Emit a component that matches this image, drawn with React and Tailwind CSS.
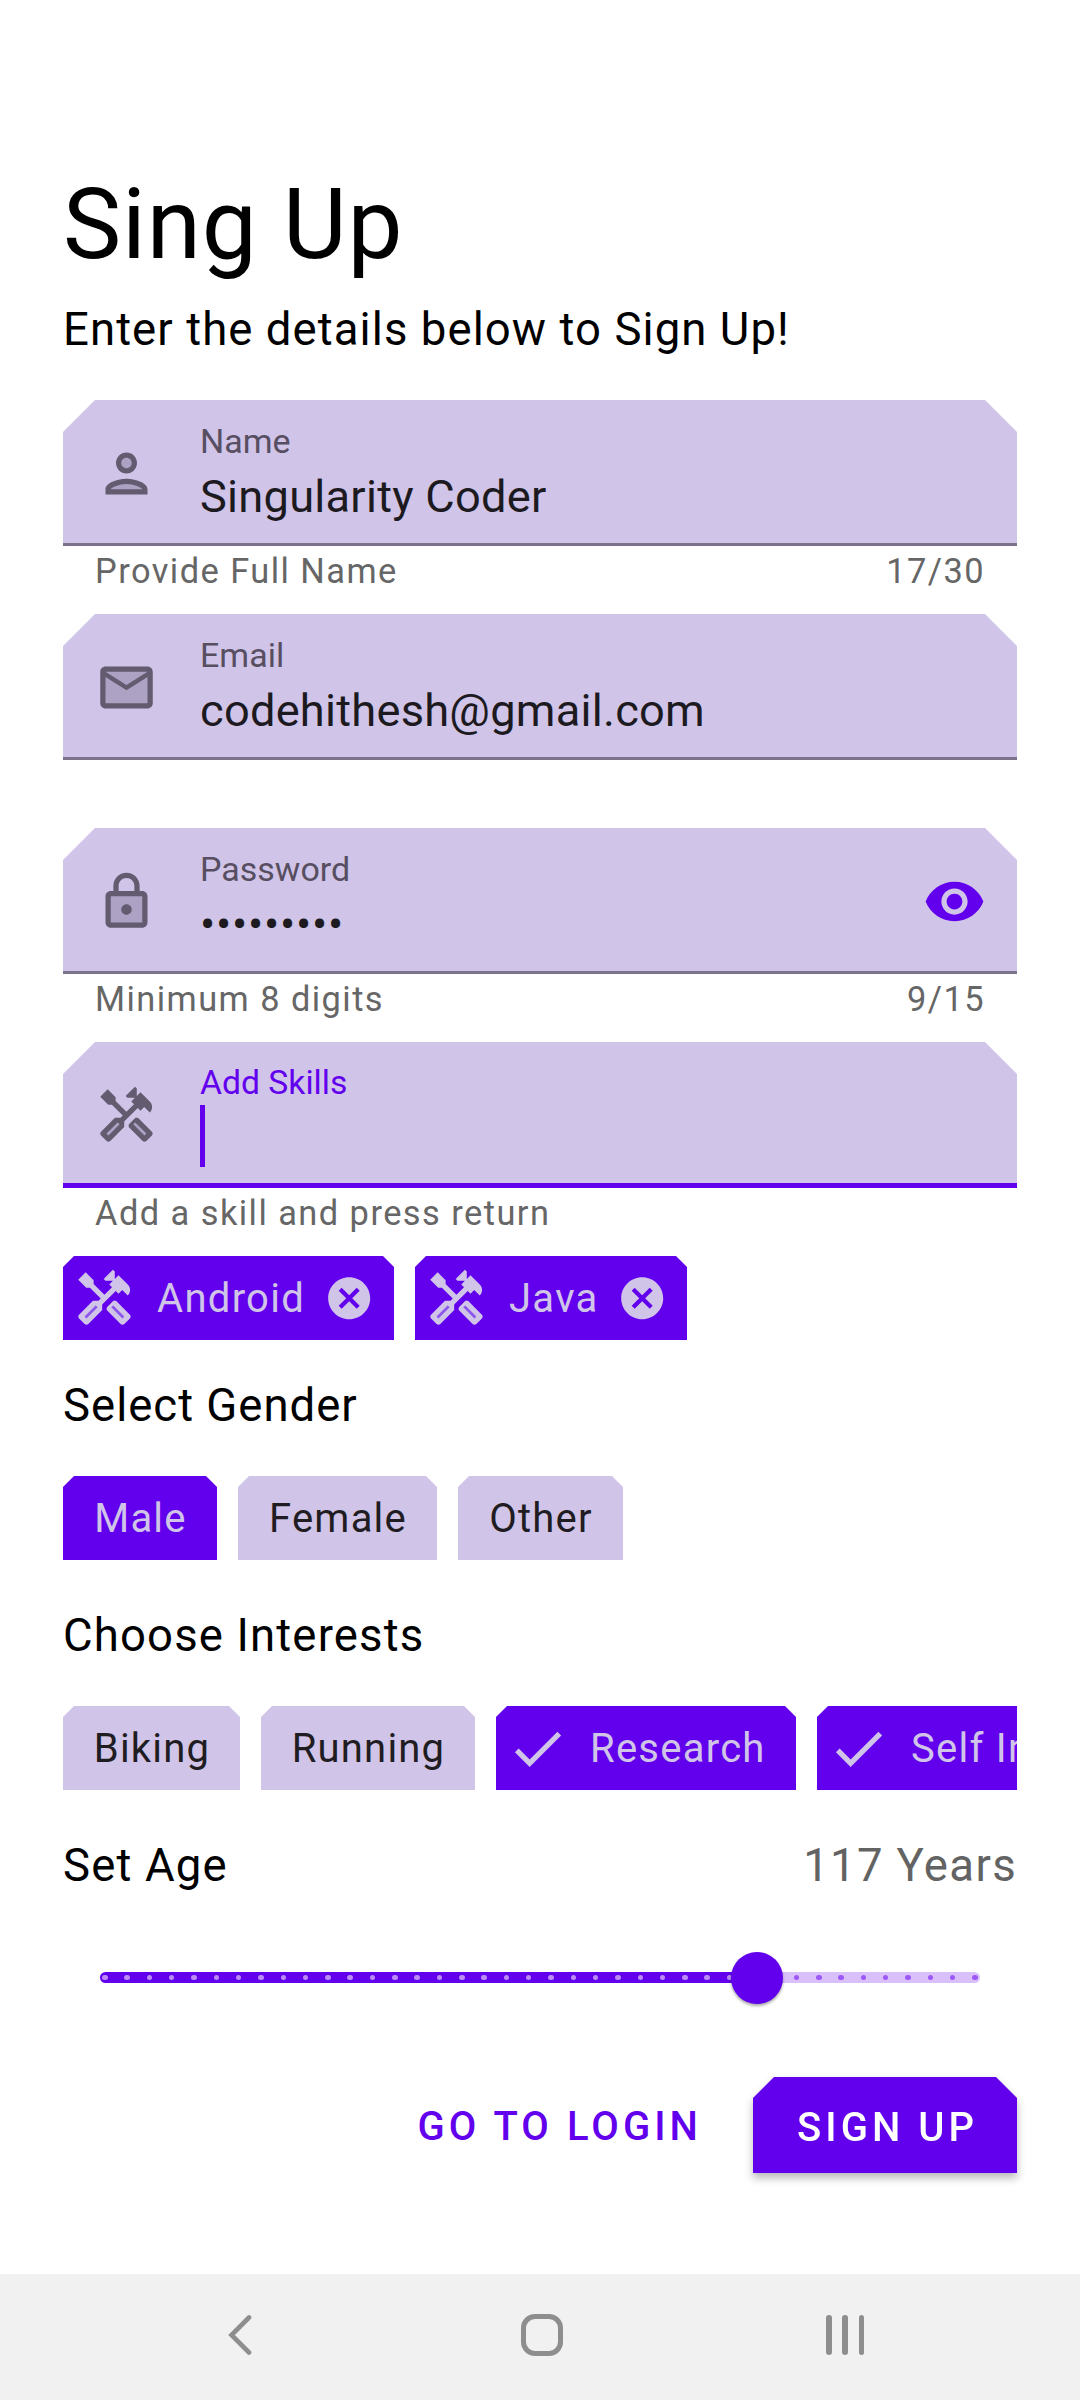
const CUT_LG = "[clip-path:polygon(32px_0,calc(100%-32px)_0,100%_32px,100%_100%,0_100%,0_32px)]";
const CUT_MD = "[clip-path:polygon(21px_0,calc(100%-21px)_0,100%_21px,100%_100%,0_100%,0_21px)]";
const CUT_SM = "[clip-path:polygon(11px_0,calc(100%-11px)_0,100%_11px,100%_100%,0_100%,0_11px)]";

function Icon({ children, className = "size-[63px]" }) {
  return (
    <svg viewBox="0 0 24 24" fill="currentColor" className={`${className} shrink-0`}>
      {children}
    </svg>
  );
}

function PersonIcon() {
  return (
    <Icon>
      <g className="text-[#ada2c3]">
        <circle cx="12" cy="8" r="2.5" fill="currentColor" />
        <path d="M12 15.5c-2.9 0-6.4 1.4-6.5 2.5v.5h13V18c-.1-1.1-3.6-2.5-6.5-2.5z" fill="currentColor" />
      </g>
      <path d="M12 12c2.21 0 4-1.79 4-4s-1.79-4-4-4-4 1.79-4 4 1.79 4 4 4zm0-6c1.1 0 2 .9 2 2s-.9 2-2 2-2-.9-2-2 .9-2 2-2zm0 8c-2.67 0-8 1.34-8 4v2h16v-2c0-2.66-5.33-4-8-4zm6 4H6v-.01C6.2 17.29 9.3 16 12 16s5.8 1.29 6 2z" />
    </Icon>
  );
}

function MailIcon() {
  return (
    <Icon>
      <path d="M3 5h18v14H3z" className="text-[#ada2c3]" fill="currentColor" />
      <path d="M22 6c0-1.1-.9-2-2-2H4c-1.1 0-2 .9-2 2v12c0 1.1.9 2 2 2h16c1.1 0 2-.9 2-2V6zm-2 0-8 5-8-5h16zm0 12H4V8l8 5 8-5v10z" />
    </Icon>
  );
}

function LockIcon() {
  return (
    <Icon>
      <path d="M5 9h14v12H5z" className="text-[#ada2c3]" fill="currentColor" />
      <path d="M18 8h-1V6c0-2.76-2.24-5-5-5S7 3.24 7 6v2H6c-1.1 0-2 .9-2 2v10c0 1.1.9 2 2 2h12c1.1 0 2-.9 2-2V10c0-1.1-.9-2-2-2zM9 6c0-1.66 1.34-3 3-3s3 1.34 3 3v2H9V6zm9 14H6V10h12v10zm-6-3c1.1 0 2-.9 2-2s-.9-2-2-2-2 .9-2 2 .9 2 2 2z" />
    </Icon>
  );
}

function ToolsIcon({ inner }) {
  return (
    <Icon>
      <g className={inner}>
        <path d="M14.6 15.35l.71-.71 4.24 4.24-.71.71z" fill="currentColor" stroke="currentColor" strokeWidth=".3" />
        <path d="M9.36 15.34l-.71-.71-4.24 4.24.71.71z" fill="currentColor" stroke="currentColor" strokeWidth=".3" />
      </g>
      <path d="M21.67 18.17l-5.3-5.3h-.99l-2.54 2.54v.99l5.3 5.3c.39.39 1.02.39 1.41 0l2.12-2.12c.39-.38.39-1.02 0-1.41zm-2.83 1.42l-4.24-4.24.71-.71 4.24 4.24-.71.71z" />
      <path d="M17.34 10.19l1.41-1.41 2.12 2.12c1.17-1.17 1.17-3.07 0-4.24l-3.54-3.54-1.41 1.41V1.71L15.22 1l-3.54 3.54.71.71h2.83l-1.41 1.41 1.06 1.06-2.89 2.89-4.13-4.13V5.06L4.83 2.04 2 4.87 5.03 7.9h1.41l4.13 4.13-.85.85H7.6l-5.3 5.3c-.39.39-.39 1.02 0 1.41l2.12 2.12c.39.39 1.02.39 1.41 0l5.3-5.3v-2.12l5.15-5.15 1.06 1.05zm-7.98 5.15l-4.24 4.24-.71-.71 4.24-4.24.71.71z" />
    </Icon>
  );
}

function EyeIcon() {
  return (
    <Icon className="size-[63px] text-[#6200ee]">
      <path d="M12 4.5C7 4.5 2.73 7.61 1 12c1.73 4.39 6 7.5 11 7.5s9.27-3.11 11-7.5c-1.73-4.39-6-7.5-11-7.5zM12 17c-2.76 0-5-2.24-5-5s2.24-5 5-5 5 2.24 5 5-2.24 5-5 5zm0-8c-1.66 0-3 1.34-3 3s1.34 3 3 3 3-1.34 3-3-1.34-3-3-3z" />
    </Icon>
  );
}

function Field({ icon, label, value, password, focused, trailing, helper, counter }) {
  return (
    <div className="flex h-[214px] flex-col">
      <div
        className={`${CUT_LG} flex h-[146px] items-center bg-[#d0c4e8] pr-[31px] pl-[32px] ${
          focused ? "shadow-[inset_0_-5px_0_#6200ee]" : "shadow-[inset_0_-3px_0_#7d728b]"
        }`}
      >
        <span className="text-[#635b6f]">{icon}</span>
        <div className="ml-[42px] flex h-full flex-1 flex-col pt-[21px]">
          <span
            className={`leading-[40px] ${
              focused ? "text-[33.7px] text-[#6200ee]" : "text-[34px] text-[#574f61]"
            }`}
          >
            {label}
          </span>
          {focused ? (
            <span className="mt-[2px] h-[62px] w-[5px] bg-[#6200ee]" />
          ) : (
            <span
              className={`mt-[6px] text-[45.2px] leading-[60px] text-[#1c1a1f] ${
                password ? "tracking-[0.75px]" : "tracking-[0.25px]"
              }`}
            >
              {value}
            </span>
          )}
        </div>
        {trailing}
      </div>
      <div className="mt-[5px] flex justify-between px-[32px] text-[34.4px] leading-[40px] tracking-[1.45px] text-[#666]">
        <span>{helper}</span>
        <span>{counter}</span>
      </div>
    </div>
  );
}

function SkillChip({ label, width }) {
  return (
    <div className={`${CUT_SM} ${width} flex h-[84px] items-center bg-[#6200ee] pr-[20px] pl-[10px] text-[#d0c4e8]`}>
      <ToolsIcon inner="text-[#8c56ec]" />
      <span className="ml-[21px] flex-1 pt-[2px] text-[40px] tracking-[1.3px]">{label}</span>
      <Icon className="size-[50.4px]">
        <path d="M12 2C6.47 2 2 6.47 2 12s4.47 10 10 10 10-4.47 10-10S17.53 2 12 2zm5 13.59L15.59 17 12 13.41 8.41 17 7 15.59 10.59 12 7 8.41 8.41 7 12 10.59 15.59 7 17 8.41 13.41 12 17 15.59z" />
      </Icon>
    </div>
  );
}

function Chip({ label, width, selected }) {
  return (
    <div
      className={`${CUT_SM} ${width} flex h-[84px] shrink-0 items-center justify-center pt-[2px] pl-px text-[40px] tracking-[1.2px] ${
        selected ? "bg-[#6200ee] text-[#d0c4e8]" : "bg-[#d0c4e8] text-[#1f1c22]"
      }`}
    >
      {label}
    </div>
  );
}

function CheckChip({ label, width }) {
  return (
    <div
      className={`${CUT_SM} ${width} flex h-[84px] shrink-0 items-center bg-[#6200ee] pl-[10px] text-[40px] tracking-[1.25px] whitespace-nowrap text-[#d0c4e8]`}
    >
      <Icon>
        <path d="M9 16.17L4.83 12l-1.42 1.41L9 19 21 7l-1.41-1.41z" />
      </Icon>
      <span className="ml-[21px] pt-[2px]">{label}</span>
    </div>
  );
}

function AgeSlider() {
  const ticks = Array.from({ length: 40 }, (_, i) => i);
  return (
    <div className="relative mx-[37px] mt-[76px] flex h-[11px] items-center justify-between rounded-full bg-[linear-gradient(90deg,#6200ee_657px,#dac0fb_657px)] px-[2px]">
      {ticks.map((i) => (
        <span key={i} className={`size-[5.5px] rounded-full ${i < 30 ? "bg-[#bb8cf8]" : "bg-[#9c58f5]"}`} />
      ))}
      <span className="absolute top-[-20px] left-[631px] size-[52px] rounded-full bg-[#6200ee] shadow-[0_2px_3px_rgba(0,0,0,0.35)]" />
    </div>
  );
}

export default function App() {
  return (
    <div className="flex h-[2400px] w-[1080px] flex-col overflow-hidden bg-white font-[Roboto,sans-serif] text-black">
      <main className="flex flex-1 flex-col px-[63px] pt-[165px]">
        <h1 className="text-[98px] leading-[120px] tracking-[0.9px]">Sing Up</h1>
        <p className="mt-[15px] mb-[40px] text-[45.5px] leading-[60px] tracking-[1.08px]">
          Enter the details below to Sign Up!
        </p>

        <Field icon={<PersonIcon />} label="Name" value="Singularity Coder" helper="Provide Full Name" counter="17/30" />
        <Field icon={<MailIcon />} label="Email" value="codehithesh@gmail.com" />
        <Field
          icon={<LockIcon />}
          label="Password"
          value="•••••••••"
          password
          trailing={<EyeIcon />}
          helper="Minimum 8 digits"
          counter="9/15"
        />
        <Field
          icon={<ToolsIcon inner="text-[#ada2c3]" />}
          label="Add Skills"
          focused
          helper="Add a skill and press return"
        />

        <div className="flex gap-[21px]">
          <SkillChip label="Android" width="w-[331px]" />
          <SkillChip label="Java" width="w-[272px]" />
        </div>

        <h2 className="mt-[36px] text-[45.5px] leading-[60px] tracking-[1px]">Select Gender</h2>
        <div className="mt-[40px] flex gap-[21px]">
          <Chip label="Male" width="w-[154px]" selected />
          <Chip label="Female" width="w-[199px]" />
          <Chip label="Other" width="w-[165px]" />
        </div>

        <h2 className="mt-[46px] text-[45.5px] leading-[60px] tracking-[1.15px]">Choose Interests</h2>
        <div className="mt-[40px] flex gap-[21px] overflow-hidden">
          <Chip label="Biking" width="w-[177px]" />
          <Chip label="Running" width="w-[214px]" />
          <CheckChip label="Research" width="w-[300px]" />
          <CheckChip label="Self Improvement" width="w-[460px]" />
        </div>

        <div className="mt-[46px] flex justify-between text-[45.5px] leading-[60px] tracking-[1.15px]">
          <h2>Set Age</h2>
          <span className="tracking-[1.35px] text-[#636363]">117 Years</span>
        </div>
        <AgeSlider />

        <div className="mt-[94px] flex items-center justify-end text-[40px] leading-[96px] font-medium tracking-[4.05px]">
          <button className="mr-[51px] h-[96px] pt-[2px] text-[#6200ee]">GO TO LOGIN</button>
          <div className="drop-shadow-[0_5px_4px_rgba(0,0,0,0.28)]">
            <button className={`${CUT_MD} block h-[96px] w-[264px] bg-[#6200ee] pt-[3px] pl-[44px] text-left text-white`}>
              SIGN UP
            </button>
          </div>
        </div>
      </main>

      <nav className="flex h-[126px] items-center bg-[#f1f1f1] pb-[4px] pl-[228px] text-[#8e8e8e]">
        <svg viewBox="0 0 24 42" className="h-[42px] w-[24px]" fill="none" stroke="currentColor" strokeWidth="4.6" strokeLinecap="round">
          <path d="M21 3.5L3.5 21 21 38.5" />
        </svg>
        <span className="ml-[269px] size-[42px] rounded-[14px] border-[5px] border-[#8e8e8e]" />
        <span className="ml-[263px] flex h-[40px] w-[38px] justify-between">
          <span className="w-[5.5px] rounded-full bg-[#8e8e8e]" />
          <span className="w-[5.5px] rounded-full bg-[#8e8e8e]" />
          <span className="w-[5.5px] rounded-full bg-[#8e8e8e]" />
        </span>
      </nav>
    </div>
  );
}
